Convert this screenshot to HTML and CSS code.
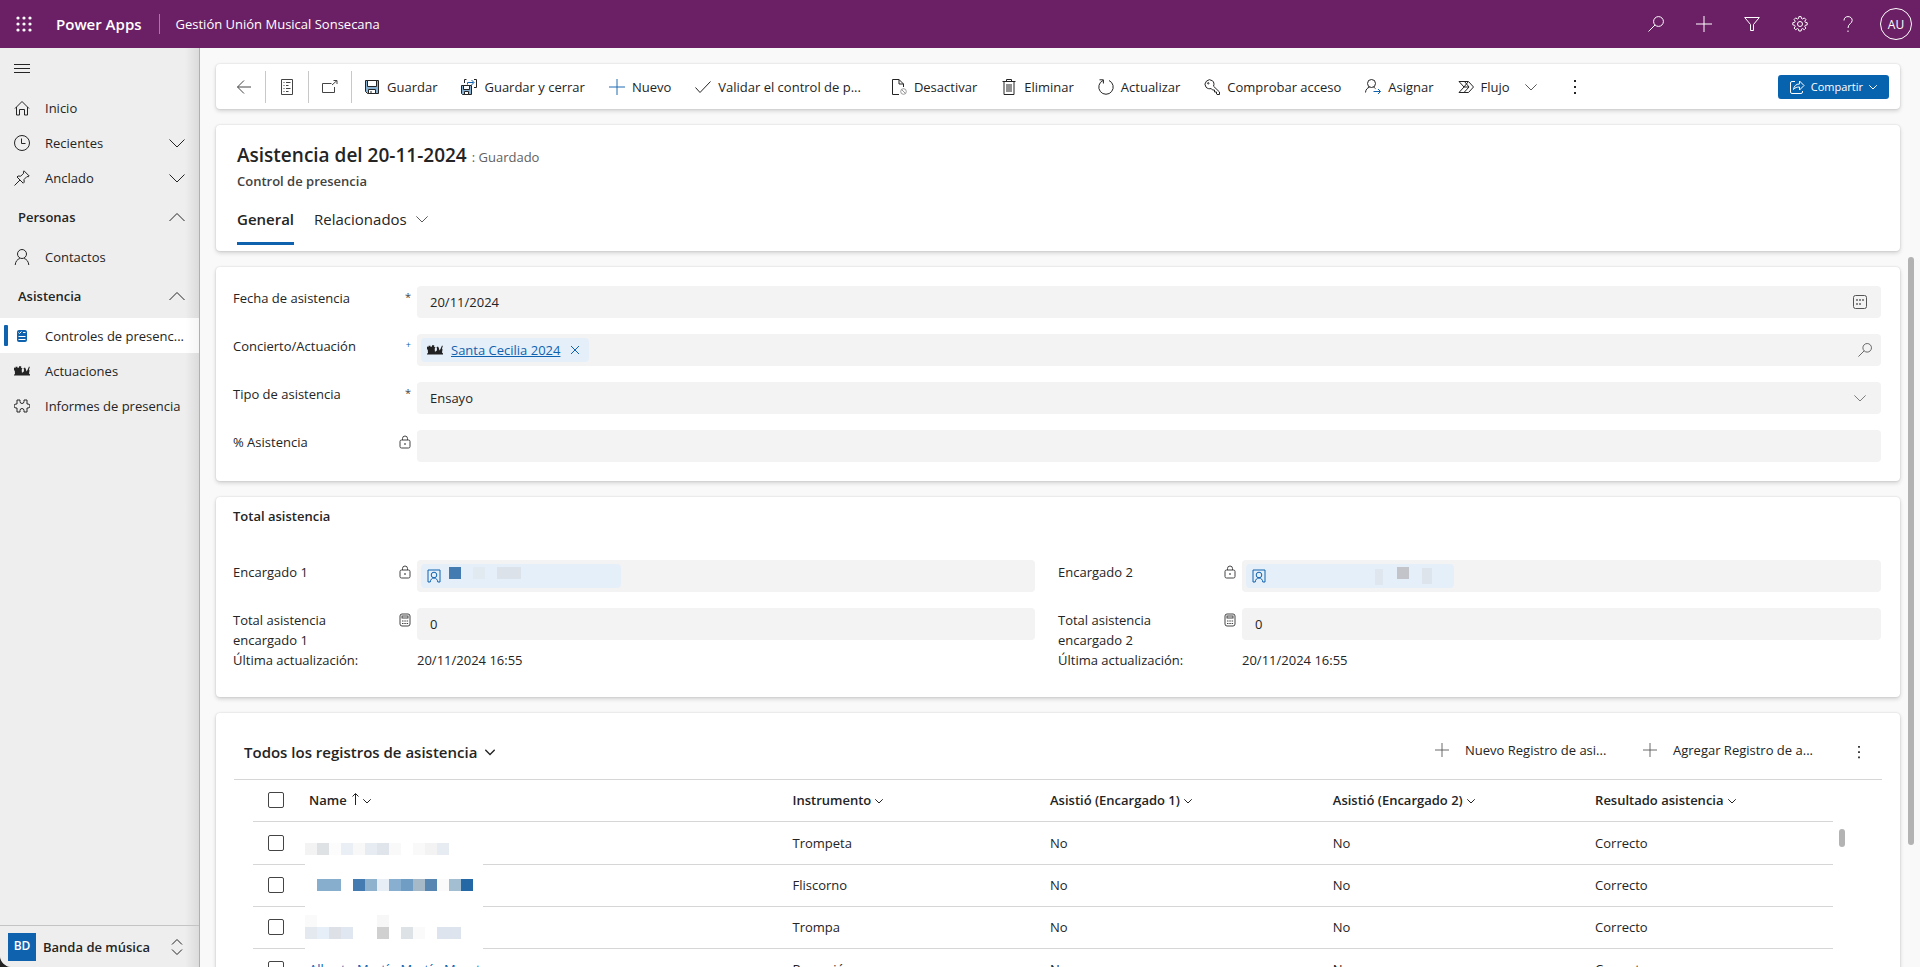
FILE: index.html
```html
<!DOCTYPE html>
<html lang="es">
<head>
    <meta charset="UTF-8">
    <meta name="viewport" content="width=device-width, initial-scale=1.0">
    <title>Asistencia del 20-11-2024 - Power Apps</title>
    <link rel="stylesheet" href="styles.css">
</head>
<body>
    <!-- shared icons -->
    <svg class="sprite" aria-hidden="true">
        <symbol id="i-down" viewBox="0 0 16 16"><path d="M.5 4.500 8 12l7.500-7.500"/></symbol>
        <symbol id="i-up" viewBox="0 0 16 16"><path d="M.5 12 8 4.500l7.500 7.500"/></symbol>
        <symbol id="i-search" viewBox="0 0 16 16"><circle cx="10.500" cy="5.500" r="4.900"/><path d="M7 9 .5 15.500"/></symbol>
        <symbol id="i-plus" viewBox="0 0 16 16"><path d="M8 0v16M0 8h16"/></symbol>
        <symbol id="i-lock" viewBox="0 0 12 14"><rect x="1" y="5" width="10" height="8" rx="1.500"/><path d="M3.500 5V3.500a2.500 2.500 0 0 1 5 0V5"/><circle cx="6" cy="9" r=".5"/></symbol>
        <symbol id="i-calc" viewBox="0 0 12 14"><rect x="1" y="1" width="10" height="12" rx="2"/><rect x="3" y="3" width="6" height="2"/><path d="M3 8h1.500M5.300 8h1.500M7.600 8h1.500M3 10.500h1.500M5.300 10.500h1.500M7.600 10.500h1.500"/></symbol>
        <symbol id="i-person" viewBox="0 0 16 16"><circle cx="8" cy="5" r="4.500"/><path d="M1.200 16c.3-3.600 2.200-5.800 4.600-6.500M14.800 16c-.3-3.600-2.200-5.800-4.600-6.500"/></symbol>
        <symbol id="i-contact" viewBox="0 0 14 14"><path d="M1 13V1h12v12h-2.200c-.3-2.400-1.600-4-3.800-4s-3.500 1.600-3.800 4z"/><circle cx="7" cy="6" r="2.800"/></symbol>
        <symbol id="i-dots" viewBox="0 0 4 16"><path class="solid" d="M1 1h2v2H1zM1 7h2v2H1zM1 13h2v2H1z"/></symbol>
        <symbol id="i-band" viewBox="0 0 16 10"><path class="solid" d="M0 1.500 1.500 2V.8h2V2L5 1.500V.3h2.200V2l1.300.3-.8 1.500.3 3.500.8-1.300 1-.2.2-2-.5-1.500 1.500-.8.8 1.500.7 2.500 1-1.500L15 .5l.8.500-.8 2.500.5 1-.5 3 1 1v1H0v-1l1-.3L.8 5 0 4z"/></symbol>
    </svg>

    <header class="topbar">
        <button class="top-btn" aria-label="Iniciador de aplicaciones">
            <svg width="16" height="16" viewBox="0 0 16 16"><g class="solid"><circle cx="2" cy="2" r="1.600"/><circle cx="8" cy="2" r="1.600"/><circle cx="14" cy="2" r="1.600"/><circle cx="2" cy="8" r="1.600"/><circle cx="8" cy="8" r="1.600"/><circle cx="14" cy="8" r="1.600"/><circle cx="2" cy="14" r="1.600"/><circle cx="8" cy="14" r="1.600"/><circle cx="14" cy="14" r="1.600"/></g></svg>
        </button>
        <a class="brand" href="#">Power Apps</a>
        <a class="app-name" href="#">Gestión Unión Musical Sonsecana</a>
        <div class="top-actions">
            <button class="top-btn" aria-label="Buscar"><svg width="16" height="16"><use href="#i-search"/></svg></button>
            <button class="top-btn" aria-label="Nuevo"><svg width="16" height="16"><use href="#i-plus"/></svg></button>
            <button class="top-btn" aria-label="Filtro"><svg width="16" height="16" viewBox="0 0 16 16"><path d="M.7 1.500h14.600L9.500 8.500v6h-3v-6z"/></svg></button>
            <button class="top-btn" aria-label="Configuración"><svg width="16" height="16" viewBox="0 0 16 16"><path d="M6.900.6h2.200l.4 1.900 1.100.5 1.700-1.100 1.600 1.600-1.100 1.700.5 1.100 1.900.4v2.200l-1.900.4-.5 1.100 1.100 1.700-1.600 1.600-1.700-1.100-1.100.5-.4 1.900H6.900l-.4-1.900-1.100-.5-1.700 1.100-1.600-1.600 1.100-1.700-.5-1.100-1.900-.4V6.700l1.900-.4.5-1.100-1.100-1.700 1.600-1.600L5.400 3l1.100-.5z"/><circle cx="8" cy="8" r="2.500"/></svg></button>
            <button class="top-btn" aria-label="Ayuda"><svg width="16" height="16" viewBox="0 0 16 16"><path d="M4 4.500C4 2 5.700.6 8 .6s4.200 1.500 4.200 3.800C12.200 7.500 8 7.800 8 12M8 14.500V16"/></svg></button>
            <button class="top-btn" aria-label="Cuenta"><span class="avatar">AU</span></button>
        </div>
    </header>

    <div class="layout">
        <nav class="sidebar">
            <button class="burger" aria-label="Contraer navegación"><svg width="16" height="16" viewBox="0 0 16 16"><path d="M0 3.500h16M0 7.500h16M0 11.500h16"/></svg></button>
            <a class="nav-item" href="#">
                <svg width="16" height="16" viewBox="0 0 16 16"><path d="M1 8.500 8 1.500l7 7M2.500 7v8h3V9.500h5V15h3V7"/></svg>
                <span>Inicio</span>
            </a>
            <button class="nav-item">
                <svg width="16" height="16" viewBox="0 0 16 16"><circle cx="8" cy="8" r="7.500"/><path d="M7.500 3.500v5h4"/></svg>
                <span>Recientes</span>
                <svg class="chev" width="16" height="16"><use href="#i-down"/></svg>
            </button>
            <button class="nav-item">
                <svg width="16" height="16" viewBox="0 0 16 16"><path d="m10 .8 5.200 5.200-1 .8-1.200-.3-3 3 .2 2.700-1 1L3 7l1-1 2.700.2 3-3-.3-1.400zM6 10 .5 15.500"/></svg>
                <span>Anclado</span>
                <svg class="chev" width="16" height="16"><use href="#i-down"/></svg>
            </button>
            <button class="nav-group">
                <span>Personas</span>
                <svg class="chev" width="16" height="16"><use href="#i-up"/></svg>
            </button>
            <a class="nav-item" href="#">
                <svg width="16" height="16"><use href="#i-person"/></svg>
                <span>Contactos</span>
            </a>
            <button class="nav-group">
                <span>Asistencia</span>
                <svg class="chev" width="16" height="16"><use href="#i-up"/></svg>
            </button>
            <a class="nav-item selected" href="#">
                <svg width="16" height="16" viewBox="0 0 16 16"><rect class="solid" x="3" y="2" width="10" height="12" rx="2"/><path class="cut" d="m4.500 4.500 1 1 2-2M9 4.500h2.500M4.500 8.500h7M4.500 11.500h7"/></svg>
                <span>Controles de presenc...</span>
            </a>
            <a class="nav-item" href="#">
                <svg width="16" height="10"><use href="#i-band"/></svg>
                <span>Actuaciones</span>
            </a>
            <a class="nav-item" href="#">
                <svg width="16" height="16" viewBox="0 0 16 16"><path d="M3 2h3v1.500a2 2 0 0 0 4 0V2h3v4h1a2 2 0 0 1 0 4h-1v4h-3v-1.500a2 2 0 0 0-4 0V14H3v-4H2a2 2 0 0 1 0-4h1z"/></svg>
                <span>Informes de presencia</span>
            </a>
            <button class="area-switch">
                <span class="area-badge">BD</span>
                <span>Banda de música</span>
                <svg class="chev" width="12" height="16" viewBox="0 0 12 16"><path d="m1 5.500 5-5 5 5M1 10.500l5 5 5-5"/></svg>
            </button>
        </nav>

        <main class="main">
            <div class="card commands">
                <button class="cmd-icon" aria-label="Volver"><svg width="16" height="16" viewBox="0 0 16 16"><path d="M15 8H1.500M8 1.500 1.500 8 8 14.500"/></svg></button>
                <button class="cmd-icon" aria-label="Formulario"><svg width="16" height="16" viewBox="0 0 16 16"><path d="M2.500.5h11v15h-11zM4.500 3.500h1M7 3.500h4.500M4.500 6.500h1M7 6.500h2.500M4.500 9.500h1M7 9.500h4.500M4.500 12.500h1M7 12.500h2.500"/></svg></button>
                <button class="cmd-icon" aria-label="Abrir en una ventana nueva"><svg width="16" height="16" viewBox="0 0 16 16"><path d="M9.500 4.500h-9v9h12V8M10 6l5-4.500M11.500 1.500H15V5"/></svg></button>
                <button class="cmd"><svg width="16" height="16" viewBox="0 0 16 16"><path class="pale" d="M1.500 1.500h13v13h-11l-2-2z"/><path class="white" d="M3.500 1.500h9v6h-9zM4.500 10.500h7v4h-7z"/><path d="M7 12v2.500"/></svg>Guardar</button>
                <button class="cmd"><svg width="16" height="16" viewBox="0 0 16 16"><path class="pale" d="M.5 6.500h10v9h-9l-1-1z"/><path class="white" d="M2.500 6.500h6v4h-6zM3.500 12.500h4v3h-4z"/><path d="M3.500 4V.5h2M13 .5h2.500v8H13"/><path class="blue" d="M6.500 5.500v-2h6M10.500 1l2.500 2.500L10.500 6"/></svg>Guardar y cerrar</button>
                <button class="cmd"><svg class="blue-plus" width="16" height="16"><use href="#i-plus"/></svg>Nuevo</button>
                <button class="cmd validate"><svg width="16" height="16" viewBox="0 0 16 16"><path d="m.5 8.500 4.500 5L15.500 2.500"/></svg>Validar el control de p...</button>
                <button class="cmd"><svg width="16" height="16" viewBox="0 0 16 16"><path d="M8 15.500H1.500V.5H8l4.500 4.500v3M8 .5V5h4.500"/><circle class="gray" cx="12.500" cy="12.500" r="2.800"/><path class="gray" d="m10.500 10.500 4 4"/></svg>Desactivar</button>
                <button class="cmd"><svg width="16" height="16" viewBox="0 0 16 16"><path d="M1.500 2.500h13M5.500 2V.5h5V2M3 2.500v13h10v-13M6 5v8M8 5v8M10 5v8"/></svg>Eliminar</button>
                <button class="cmd"><svg width="16" height="16" viewBox="0 0 16 16"><path d="M5 1.500A7.200 7.200 0 1 0 11 1.500M1.500.8H5.400V4.500"/></svg>Actualizar</button>
                <button class="cmd"><svg width="16" height="16" viewBox="0 0 16 16"><path d="M9.500 7.200c1-2.200.3-4.200-1-5.400A4.600 4.600 0 0 0 2 8.200c1.500 1.500 3.500 1.900 5.200 1.300l1.300 1.500h2v2h2v2l.5.5h2.500v-2.500z"/><circle cx="4.300" cy="4.300" r=".7"/></svg>Comprobar acceso</button>
                <button class="cmd"><svg width="16" height="16" viewBox="0 0 16 16"><circle cx="6.500" cy="4.500" r="4"/><path d="M.5 13.500c.2-2.800 1.800-4.800 4-5.300M8.500 8.200c.8.200 1.500.8 2 1.400"/><path class="blue" d="M8.500 12.500h7M13 10l2.500 2.500L13 15"/></svg>Asignar</button>
                <button class="cmd"><svg width="16" height="16" viewBox="0 0 16 16"><path d="M1 2.500h9.500L15.500 8l-5 5.500H1L6 8zM6.500 2.500 11 8l-5 5.500M6 8h5M6 8l4-5"/></svg>Flujo<svg class="cmd-chev" width="12" height="12"><use href="#i-down"/></svg></button>
                <button class="cmd more" aria-label="Más comandos"><svg width="4" height="16"><use href="#i-dots"/></svg></button>
                <button class="share"><svg width="16" height="16" viewBox="0 0 16 16"><path d="M6 2.500H3A1.500 1.500 0 0 0 1.500 4v9A1.500 1.500 0 0 0 3 14.500h9a1.500 1.500 0 0 0 1.500-1.500v-1M4.500 10.500C5 7 7 5 10.500 5V2l4.500 4.500-4.500 4.500V8C8 8 6 8.500 4.500 10.500z"/></svg>Compartir<svg class="strong" width="8" height="8"><use href="#i-down"/></svg></button>
            </div>

            <section class="card record">
                <div class="record-title"><h1>Asistencia del 20-11-2024</h1><span>: Guardado</span></div>
                <h2>Control de presencia</h2>
                <div class="tabs" role="tablist">
                    <button class="tab active" role="tab">General</button>
                    <button class="tab" role="tab">Relacionados<svg width="12" height="12"><use href="#i-down"/></svg></button>
                </div>
            </section>

            <section class="card fields">
                <div class="field">
                    <label for="fecha">Fecha de asistencia</label><span class="mark">*</span>
                    <div class="box">
                        <input id="fecha" type="text" value="20/11/2024">
                        <button class="box-btn inset" aria-label="Calendario"><svg width="14" height="14" viewBox="0 0 14 14"><rect x=".5" y=".5" width="13" height="13" rx="2"/><path class="dots" d="M3 5h2M6 5h2M9 5h2M3 9h2M6 9h2"/></svg></button>
                    </div>
                </div>
                <div class="field">
                    <label for="concierto">Concierto/Actuación</label><span class="mark rec">+</span>
                    <div class="box lookup">
                        <span class="chip">
                            <svg width="16" height="10"><use href="#i-band"/></svg>
                            <a href="#">Santa Cecilia 2024</a>
                            <button aria-label="Quitar"><svg width="10" height="10" viewBox="0 0 10 10"><path d="m1 1 8 8M9 1 1 9"/></svg></button>
                        </span>
                        <input id="concierto" type="text">
                        <button class="box-btn" aria-label="Buscar"><svg width="14" height="14"><use href="#i-search"/></svg></button>
                    </div>
                </div>
                <div class="field">
                    <label for="tipo">Tipo de asistencia</label><span class="mark">*</span>
                    <div class="box">
                        <select id="tipo"><option>Ensayo</option></select>
                        <svg class="box-chev" width="12" height="12"><use href="#i-down"/></svg>
                    </div>
                </div>
                <div class="field">
                    <label for="porcentaje">% Asistencia</label><span class="mark"><svg width="12" height="14"><use href="#i-lock"/></svg></span>
                    <div class="box"><input id="porcentaje" type="text" readonly></div>
                </div>
            </section>

            <section class="card totals">
                <h3>Total asistencia</h3>
                <div class="columns">
                    <div class="column">
                        <div class="field">
                            <label>Encargado 1</label><span class="mark"><svg width="12" height="14"><use href="#i-lock"/></svg></span>
                            <div class="box lookup">
                                <span class="chip hidden-name"><svg width="14" height="14"><use href="#i-contact"/></svg>
                                    <svg class="mosaic" width="166" height="24"><rect x="0" y="3" width="12" height="12" fill="#447bb0"/><rect x="24" y="3" width="12" height="12" fill="#e1e9f1"/><rect x="48" y="3" width="24" height="12" fill="#dbe2ea"/></svg>
                                </span>
                            </div>
                        </div>
                        <div class="field">
                            <label for="total1">Total asistencia encargado 1</label><span class="mark"><svg width="12" height="14"><use href="#i-calc"/></svg></span>
                            <div class="box"><input id="total1" type="text" value="0" readonly></div>
                        </div>
                        <div class="updated"><span>Última actualización:</span><span>20/11/2024 16:55</span></div>
                    </div>
                    <div class="column">
                        <div class="field">
                            <label>Encargado 2</label><span class="mark"><svg width="12" height="14"><use href="#i-lock"/></svg></span>
                            <div class="box lookup">
                                <span class="chip hidden-name"><svg width="14" height="14"><use href="#i-contact"/></svg>
                                    <svg class="mosaic" width="174" height="24"><rect x="101" y="5" width="8" height="16" fill="#dfe6ee"/><rect x="123" y="3" width="12" height="12" fill="#c3c4c9"/><rect x="148" y="4" width="10" height="16" fill="#dde4ec"/></svg>
                                </span>
                            </div>
                        </div>
                        <div class="field">
                            <label for="total2">Total asistencia encargado 2</label><span class="mark"><svg width="12" height="14"><use href="#i-calc"/></svg></span>
                            <div class="box"><input id="total2" type="text" value="0" readonly></div>
                        </div>
                        <div class="updated"><span>Última actualización:</span><span>20/11/2024 16:55</span></div>
                    </div>
                </div>
            </section>

            <section class="card records">
                <div class="grid-head">
                    <button class="view">Todos los registros de asistencia<svg class="strong" width="10" height="10"><use href="#i-down"/></svg></button>
                    <button class="grid-cmd"><svg width="14" height="14"><use href="#i-plus"/></svg>Nuevo Registro de asi...</button>
                    <button class="grid-cmd"><svg width="14" height="14"><use href="#i-plus"/></svg>Agregar Registro de a...</button>
                    <button class="grid-more" aria-label="Más comandos"><svg width="4" height="14"><use href="#i-dots"/></svg></button>
                </div>
                <div class="grid-body">
                    <table>
                        <colgroup><col class="c-check"><col class="c-name"><col class="c-inst"><col class="c-one"><col class="c-two"><col class="c-res"></colgroup>
                        <thead>
                            <tr>
                                <th><input type="checkbox" aria-label="Seleccionar todo"></th>
                                <th>Name <svg class="sort" width="7" height="12" viewBox="0 0 7 12"><path d="M3.500 12V.8M.5 3.500l3-3 3 3"/></svg><svg width="8" height="8"><use href="#i-down"/></svg></th>
                                <th>Instrumento<svg width="8" height="8"><use href="#i-down"/></svg></th>
                                <th>Asistió (Encargado 1)<svg width="8" height="8"><use href="#i-down"/></svg></th>
                                <th>Asistió (Encargado 2)<svg width="8" height="8"><use href="#i-down"/></svg></th>
                                <th>Resultado asistencia<svg width="8" height="8"><use href="#i-down"/></svg></th>
                            </tr>
                        </thead>
                        <tbody>
                            <tr>
                                <td><input type="checkbox" aria-label="Seleccionar fila 1"></td>
                                <td class="name"><svg class="mosaic" width="178" height="43"><g transform="translate(0 21)"><rect width="12" height="12" fill="#f3f3f3"/><rect x="12" width="12" height="12" fill="#dfe2e5"/><rect x="24" width="12" height="12" fill="#fcfcfc"/><rect x="36" width="12" height="12" fill="#e9eff5"/><rect x="48" width="12" height="12" fill="#f8f8f8"/><rect x="60" width="12" height="12" fill="#e7ecf2"/><rect x="72" width="12" height="12" fill="#dfe5ea"/><rect x="84" width="12" height="12" fill="#f9f9f9"/><rect x="108" width="12" height="12" fill="#f9f9f9"/><rect x="120" width="12" height="12" fill="#f3f3f3"/><rect x="132" width="12" height="12" fill="#e7ecf2"/></g></svg></td>
                                <td>Trompeta</td><td>No</td><td>No</td><td>Correcto</td>
                            </tr>
                            <tr>
                                <td><input type="checkbox" aria-label="Seleccionar fila 2"></td>
                                <td class="name"><svg class="mosaic" width="178" height="43"><g transform="translate(0 14)"><rect x="12" width="24" height="12" fill="#88aece"/><rect x="48" width="12" height="12" fill="#447bb0"/><rect x="60" width="12" height="12" fill="#8fb2cf"/><rect x="72" width="12" height="12" fill="#e7eef5"/><rect x="84" width="12" height="12" fill="#88aed0"/><rect x="96" width="12" height="12" fill="#709dc3"/><rect x="108" width="12" height="12" fill="#a6b9c9"/><rect x="120" width="12" height="12" fill="#5886b3"/><rect x="132" width="12" height="12" fill="#fafafa"/><rect x="144" width="12" height="12" fill="#a3bdd1"/><rect x="156" width="12" height="12" fill="#2468a5"/></g></svg></td>
                                <td>Fliscorno</td><td>No</td><td>No</td><td>Correcto</td>
                            </tr>
                            <tr>
                                <td><input type="checkbox" aria-label="Seleccionar fila 3"></td>
                                <td class="name"><svg class="mosaic" width="178" height="43"><rect y="8" width="12" height="12" fill="#fafafa"/><rect x="72" y="8" width="12" height="12" fill="#f7f7f7"/><g transform="translate(0 20)"><rect width="12" height="12" fill="#e4e9f0"/><rect x="12" width="12" height="12" fill="#e6eef7"/><rect x="24" width="12" height="12" fill="#dde0e6"/><rect x="36" width="12" height="12" fill="#e0e7f0"/><rect x="72" width="12" height="12" fill="#d0d0d0"/><rect x="96" width="12" height="12" fill="#dde2e7"/><rect x="108" width="12" height="12" fill="#fafafa"/><rect x="132" width="24" height="12" fill="#dde4ed"/></g></svg></td>
                                <td>Trompa</td><td>No</td><td>No</td><td>Correcto</td>
                            </tr>
                            <tr>
                                <td><input type="checkbox" aria-label="Seleccionar fila 4"></td>
                                <td><a href="#">Alberto Martín Martín Moreto</a></td>
                                <td>Percusión</td><td>No</td><td>No</td><td>Correcto</td>
                            </tr>
                        </tbody>
                    </table>
                    <div class="grid-scroll"></div>
                </div>
            </section>
            <div class="page-scroll"></div>
        </main>
    </div>
</body>
</html>
```

FILE: styles.css
```css
* {
    box-sizing: border-box;
}
html {
    background: #222;
}
body {
    margin: 0;
    height: 100vh;
    display: flex;
    flex-direction: column;
    overflow: hidden;
    border-radius: 0 0 0 12px;
    background: #f9f9f9;
    font-family: "Open Sans", "Noto Sans", sans-serif;
    font-size: 13px;
    line-height: 20px;
    color: #242424;
}
h1, h2, h3 {
    margin: 0;
    font-weight: 600;
}
button, input, select {
    font: inherit;
    color: inherit;
    background: none;
    border: 0;
    padding: 0;
    margin: 0;
}
button {
    cursor: pointer;
}
a {
    color: inherit;
    text-decoration: none;
}
svg {
    flex: none;
    fill: none;
    stroke: currentColor;
    stroke-width: 1;
}
.sprite {
    position: absolute;
    width: 0;
    height: 0;
}
.solid {
    fill: currentColor;
    stroke: none;
}
.strong {
    stroke-width: 2;
}
.mosaic {
    stroke: none;
}

/* top bar */
.topbar {
    flex: none;
    display: flex;
    align-items: center;
    height: 48px;
    background: #6b2065;
    color: #fff;
}
.top-btn {
    display: flex;
    align-items: center;
    justify-content: center;
    width: 48px;
    height: 48px;
}
.brand {
    padding: 0 17px 0 8px;
    border-right: 1px solid #a679a3;
    font-size: 15px;
    font-weight: 600;
}
.app-name {
    margin-left: 16px;
}
.top-actions {
    display: flex;
    margin-left: auto;
}
.avatar {
    width: 32px;
    height: 32px;
    border: 1px solid #fff;
    border-radius: 50%;
    font-size: 12px;
    line-height: 32px;
}

/* navigation */
.layout {
    flex: 1;
    display: flex;
    min-height: 0;
}
.sidebar {
    flex: none;
    display: flex;
    flex-direction: column;
    width: 200px;
    border-right: 1px solid #b0b0b0;
    background: linear-gradient(to left, rgba(0, 0, 0, .08), transparent 14px) #eee;
}
.burger {
    height: 42px;
    padding: 0 14px;
    text-align: left;
}
.burger svg {
    display: block;
}
.nav-item, .nav-group {
    display: flex;
    align-items: center;
    height: 35px;
    padding: 0 14px;
    gap: 15px;
    text-align: left;
    white-space: nowrap;
}
.nav-group {
    height: 44px;
    padding-left: 18px;
    font-weight: 600;
}
.chev {
    margin-left: auto;
}
.selected {
    background: linear-gradient(to left, rgba(0, 0, 0, .04), transparent 14px) #fff;
}
.selected::before {
    content: "";
    width: 4px;
    height: 21px;
    margin: 0 -9px 0 -10px;
    border-radius: 1px;
    background: #0f62ae;
}
.selected svg {
    color: #0f62ae;
}
.cut {
    stroke: #fff;
}
.area-switch {
    display: flex;
    align-items: center;
    gap: 7px;
    height: 42px;
    margin-top: auto;
    padding: 0 16px 0 8px;
    border-top: 1px solid #c4c4c4;
    font-weight: 600;
}
.area-badge {
    width: 28px;
    height: 28px;
    background: #0f62ae;
    color: #fff;
    font-size: 12px;
    line-height: 26px;
}

/* main area */
.main {
    position: relative;
    flex: 1;
    min-width: 0;
    display: flex;
    flex-direction: column;
    gap: 16px;
    padding: 16px 20px 0 16px;
    overflow: hidden;
}
.card {
    flex: none;
    border-radius: 4px;
    background: #fff;
    box-shadow: 0 0 2px rgba(0, 0, 0, .14), 0 2px 4px rgba(0, 0, 0, .16);
}
.page-scroll {
    position: absolute;
    top: 209px;
    right: 6px;
    width: 6px;
    height: 588px;
    border-radius: 3px;
    background: #b3b3b3;
}

/* command bar */
.commands {
    display: flex;
    align-items: center;
    height: 45px;
    padding: 0 11px 0 7px;
}
.cmd-icon {
    display: flex;
    align-items: center;
    justify-content: center;
    width: 43px;
    height: 32px;
    border-right: 1px solid #c8c8c8;
    color: #444;
}
.cmd {
    display: flex;
    align-items: center;
    gap: 7px;
    height: 32px;
    padding: 0 12px;
    white-space: nowrap;
}
.validate {
    padding-right: 18px;
}
.pale {
    fill: #8ab2d3;
}
.white {
    fill: #fff;
}
.blue {
    stroke: #0f62ae;
}
.gray {
    stroke: #999;
}
.blue-plus {
    color: #1f6db3;
}
.cmd-chev {
    margin-left: 8px;
}
.more {
    padding: 0 24px;
}
.share {
    display: flex;
    align-items: center;
    gap: 6px;
    height: 24px;
    margin-left: auto;
    padding: 0 12px 0 11px;
    border-radius: 3px;
    background: #0863af;
    color: #fff;
    font-size: 11px;
}

/* record header */
.record {
    height: 126px;
    padding: 16px 21px 0;
}
.record-title {
    display: flex;
    align-items: baseline;
    gap: 5px;
    color: #616161;
}
h1 {
    font-size: 19px;
    line-height: 28px;
    color: #242424;
}
h2 {
    margin-top: 2px;
    font-size: 13px;
    color: #424242;
}
.tabs {
    display: flex;
    gap: 20px;
    margin-top: 14px;
}
.tab {
    display: flex;
    align-items: center;
    gap: 9px;
    height: 40px;
    padding-bottom: 9px;
    border-bottom: 3px solid transparent;
    font-size: 15px;
}
.active {
    border-color: #0f62ae;
    font-weight: 600;
}

/* form */
.fields, .totals {
    padding: 19px 19px 19px 17px;
}
.fields {
    display: flex;
    flex-direction: column;
    gap: 16px;
}
.field {
    display: flex;
    height: 32px;
}
.field label {
    width: 140px;
    padding-top: 2px;
}
.mark {
    width: 44px;
    padding: 1px 6px 0 0;
    text-align: right;
    font-size: 11px;
    color: #444;
}
.mark svg {
    display: block;
    margin: 4px 0 0 auto;
}
.rec {
    color: #0f62ae;
    font-size: 9px;
}
.box {
    flex: 1;
    display: flex;
    align-items: center;
    position: relative;
    min-width: 0;
    border-radius: 4px;
    background: #f3f3f3;
}
.box input, .box select {
    flex: 1;
    min-width: 0;
    height: 32px;
    padding: 0 13px;
    appearance: none;
}
.box-btn {
    padding-right: 9px;
    color: #555;
}
.box-btn svg {
    display: block;
}
.inset {
    padding-right: 14px;
}
.dots {
    stroke: #888;
    stroke-width: 2;
}
.box-chev {
    position: absolute;
    right: 15px;
    color: #555;
    pointer-events: none;
}
.lookup {
    padding-left: 4px;
}
.chip {
    display: flex;
    align-items: center;
    gap: 8px;
    height: 24px;
    padding: 0 9px 0 6px;
    border-radius: 4px;
    background: #e5effa;
    color: #0f62ae;
}
.chip a {
    text-decoration: underline;
}
.chip > svg:first-child {
    color: #222;
}
.chip button {
    padding-left: 2px;
}
.chip button svg {
    display: block;
}
.hidden-name {
    padding-right: 6px;
}
.hidden-name > svg:first-child {
    color: #0f62ae;
}
.totals {
    height: 200px;
    padding-top: 9px;
}
h3 {
    font-size: 13px;
}
.columns {
    display: grid;
    grid-template-columns: 802fr 823fr;
    gap: 23px;
    margin-top: 34px;
}
.column {
    display: flex;
    flex-direction: column;
    gap: 16px;
}
.updated {
    display: flex;
    margin-top: -6px;
}
.updated span:first-child {
    width: 184px;
}

/* records grid */
.records {
    padding: 15px 18px 0;
}
.grid-head {
    display: flex;
    align-items: center;
    height: 52px;
    padding: 0 21px 4px 10px;
    border-bottom: 1px solid #d6d6d6;
}
.view {
    display: flex;
    align-items: center;
    gap: 8px;
    margin-right: auto;
    font-size: 15px;
    font-weight: 600;
}
.grid-cmd {
    display: flex;
    align-items: center;
    gap: 16px;
    width: 174px;
    height: 28px;
    margin-right: 34px;
    padding-bottom: 4px;
    white-space: nowrap;
}
.grid-cmd svg {
    color: #555;
}
.grid-more {
    margin-left: 6px;
}
.grid-more svg {
    display: block;
}
.grid-body {
    position: relative;
    padding: 0 49px 0 19px;
}
table {
    width: 100%;
    table-layout: fixed;
    border-collapse: collapse;
}
.c-check {
    width: 44px;
}
.c-name {
    width: 30.6%;
}
.c-inst {
    width: 16.3%;
}
.c-one {
    width: 17.9%;
}
.c-two {
    width: 16.6%;
}
th, td {
    height: 42px;
    padding: 0 12px;
    border-bottom: 1px solid #d6d6d6;
    text-align: left;
    white-space: nowrap;
}
th {
    height: 41px;
    font-weight: 600;
}
tbody tr:first-child td {
    height: 43px;
}
th:first-child, td:first-child {
    padding: 0 0 0 15px;
}
th svg {
    margin-left: 4px;
    stroke-width: 2;
}
th .sort {
    margin-left: 2px;
    stroke-width: 1;
}
td a {
    color: #0f62ae;
}
input[type="checkbox"] {
    display: block;
    width: 16px;
    height: 16px;
    appearance: none;
    border: 1px solid #444;
    border-radius: 2px;
}
.name {
    position: relative;
}
.name .mosaic {
    position: absolute;
    top: 0;
    left: 8px;
    background: #fff;
}
.grid-scroll {
    position: absolute;
    top: 49px;
    right: 37px;
    width: 6px;
    height: 18px;
    border-radius: 3px;
    background: #b3b3b3;
}
```
